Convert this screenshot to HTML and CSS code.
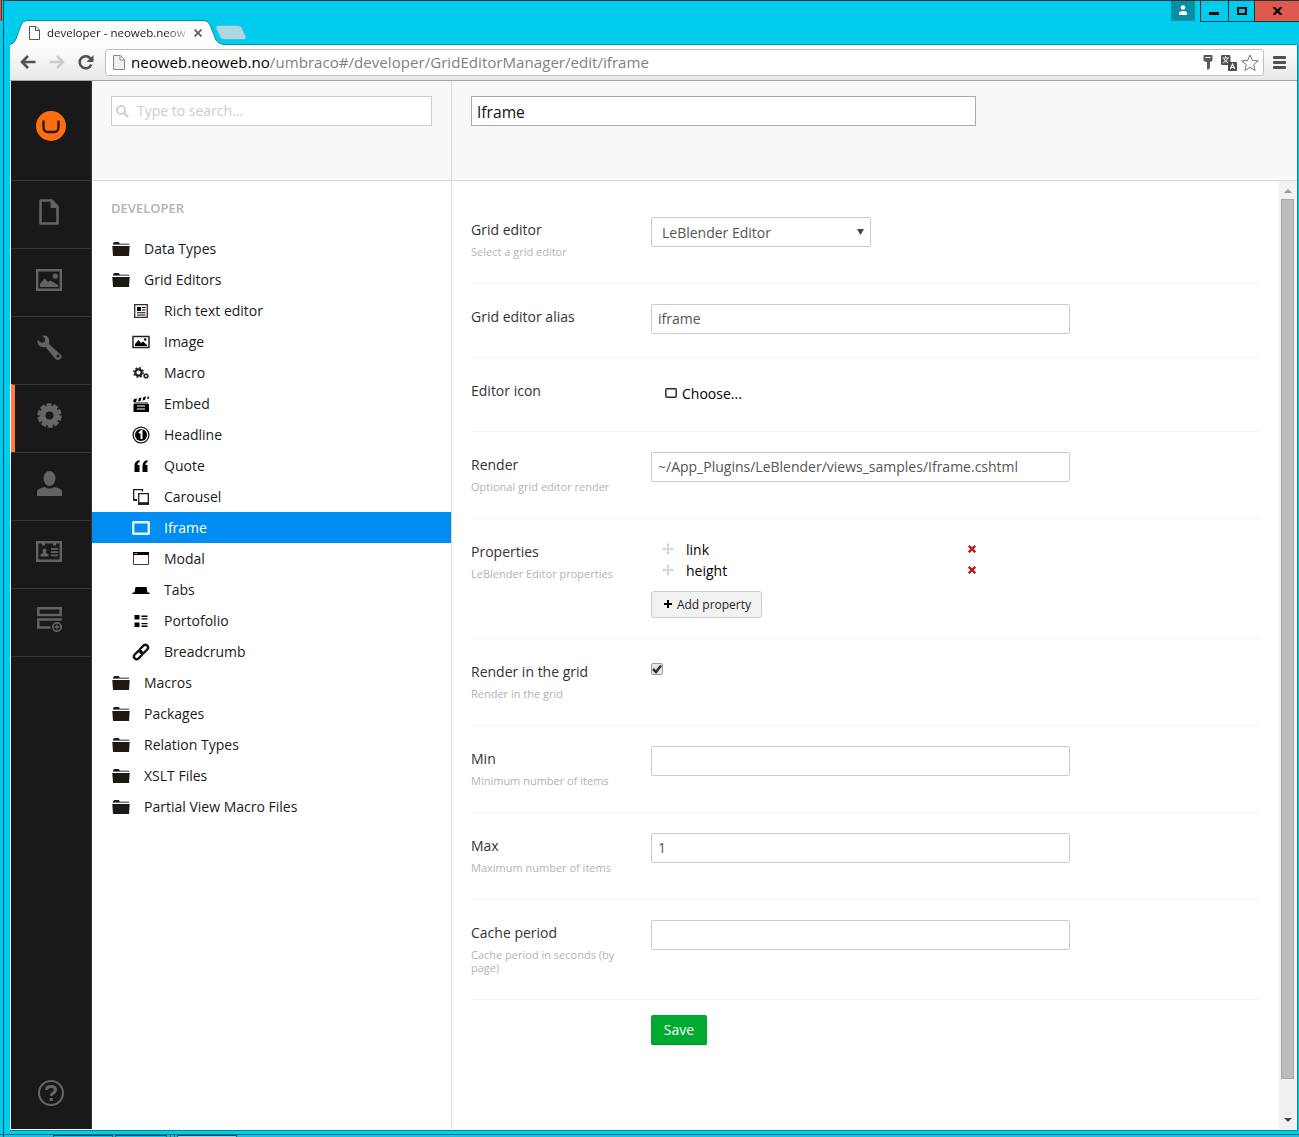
FILE: index.html
```html
<!DOCTYPE html>
<html lang="en">
<head>
<meta charset="utf-8">
<title>developer - neoweb.neoweb.no</title>
<link rel="stylesheet" href="styles.css">
</head>
<body>
<div class="desktop">
  <span class="behind-close"></span>
  <header class="titlebar">
    <div class="tab">
      <svg class="tab-shape" width="212" height="26" viewBox="0 0 212 26"><path d="M0 26V25Q4 24 6 19L11 5Q13 .5 17 .5H194Q198 .5 200 5L206 20Q208 24 212 24V26Z" fill="#fdfdfd"/><path d="M0 24.5Q4 24 6 19L11 5Q13 .5 17 .5H194Q198 .5 200 5L206 20Q208 23.500 212 23.500" fill="none" stroke="#078fa8"/></svg>
      <div class="tab-content">
        <svg width="11" height="14" viewBox="0 0 11 14" fill="#fff" stroke="#555"><path d="M.5.5H7L10.500 4V13.500H.5ZM6.500.5V4.500H10.500"/></svg>
        <span class="tab-title">developer - neoweb.neow</span>
        <svg width="8" height="8" viewBox="0 0 8 8" stroke="#5a5a5a" stroke-width="1.700"><path d="M.5.5l7 7M7.500.5l-7 7"/></svg>
      </div>
    </div>
    <svg class="new-tab" width="32" height="15" viewBox="0 0 32 15"><path d="M3 .5H23Q26 .5 27 3L31 12Q31 14.500 29 14.500H9Q6 14.500 5 12L1 3Q.5.5 3 .5Z" fill="#afd6e3" stroke="#3fbdd3" stroke-width=".8"/></svg>
    <div class="controls">
      <span class="profile"><svg width="10" height="10" viewBox="0 0 10 10" fill="#fff"><circle cx="5" cy="2.500" r="2.300"/><path d="M1 10V8Q1 6 5 6T9 8V10Z"/></svg></span>
      <span class="minimize"><svg width="10" height="3"><path d="M0 0H10V3H0Z"/></svg></span>
      <span class="maximize"><svg width="10" height="8" fill="none" stroke="#000" stroke-width="2"><path d="M1 1H9V7H1Z"/></svg></span>
      <span class="close"><svg width="9" height="8" viewBox="0 0 9 8" stroke="#000" stroke-width="2.200"><path d="M.5 0L8.500 8M8.500 0L.5 8"/></svg></span>
    </div>
  </header>
  <main class="browser">
    <nav class="toolbar">
      <svg class="nav-icon" width="16" height="14" viewBox="0 0 16 14" fill="none" stroke="#525252" stroke-width="2.600"><path d="M15.500 7H2M8 1L2 7L8 13"/></svg>
      <svg class="nav-icon forward" width="16" height="14" viewBox="0 0 16 14" fill="none" stroke="#cbcbcb" stroke-width="2.600"><path d="M.5 7H14M8 1L14 7L8 13"/></svg>
      <svg class="nav-icon reload" width="16" height="15" viewBox="0 0 16 15"><path d="M12.500 3.600A6 6 0 1 0 13.300 9.500" fill="none" stroke="#525252" stroke-width="2.600"/><path d="M15.500 0V7H8.500Z" fill="#525252"/></svg>
      <div class="address">
        <svg class="page-icon" width="12" height="15" viewBox="0 0 12 15" fill="#f1f1f1" stroke="#888"><path d="M.5.5H7.500L11.500 4.500V14.500H.5ZM7 .5V5H11.500"/></svg>
        <span class="url"><b>neoweb.neoweb.no</b>/umbraco#/developer/GridEditorManager/edit/iframe</span>
        <svg width="10" height="15" viewBox="0 0 10 15"><path d="M.5 1Q.5 0 1.500 0H8.500Q9.500 0 9.500 1V5Q9.500 6.500 7 7V13L5.500 14.500H4V7Q.5 6.500.5 5Z" fill="#5b5b5b"/><path d="M2.500 2H7.500V3H2.500Z" fill="#fff"/></svg>
        <svg class="translate" width="16" height="16" viewBox="0 0 16 16"><rect width="9.500" height="10" rx="1" fill="#555"/><path d="M1.500 3H8M4.700 1.200V3M6.800 3Q6 6 2 8M2.700 3.500Q4 6.500 7.500 8" stroke="#fff" fill="none" stroke-width=".9"/><rect x="7" y="7" width="9" height="9" rx="1" fill="#4d4d4d"/><path d="M9.300 14L11.500 9L13.700 14M10 12.500H13" stroke="#fff" fill="none" stroke-width="1.100"/></svg>
        <svg width="18" height="18" viewBox="0 0 18 18" fill="#fff" stroke="#747474" stroke-linejoin="round"><path d="M9 1L11.300 6.400L17.200 6.900L12.700 10.700L14.100 16.500L9 13.400L3.900 16.500L5.300 10.700L.8 6.900L6.700 6.400Z"/></svg>
      </div>
      <svg class="menu" width="13" height="13" fill="#505050"><rect width="13" height="3" rx="1"/><rect y="5" width="13" height="3" rx="1"/><rect y="10" width="13" height="3" rx="1"/></svg>
    </nav>
    <div class="app">
      <aside class="sections">
        <div class="logo"><svg width="30" height="30" viewBox="0 0 30 30"><circle cx="15" cy="15" r="15" fill="#ff6d10"/><path d="M7.500 9.500V16Q7.500 21 12 21H18Q22.500 21 22.500 16V9.500" fill="none" stroke="#2b170c" stroke-width="2.300"/></svg></div>
        <a class="section"><svg width="20" height="26" viewBox="0 0 20 26"><path d="M2 1.500H12.500L18.500 7.500V24.500H1.500V2Z" fill="none" stroke="#636363" stroke-width="2.600" stroke-linejoin="round"/><path d="M11.500 1V9H19Z" fill="#636363"/></svg></a>
        <a class="section"><svg width="26" height="22" viewBox="0 0 26 22"><path d="M1.200 1.200H24.800V20.800H1.200Z" fill="none" stroke="#636363" stroke-width="2.400"/><path d="M4 18V15L8.500 9.500L12 13L14.500 11.500L22 16V18Z" fill="#636363"/><circle cx="19.300" cy="7" r="2.600" fill="#636363"/></svg></a>
        <a class="section"><svg width="25" height="25" viewBox="0 0 25 25"><path d="M5 .8Q10-.5 12 4Q12.500 7 12 9L23.500 19.500Q26 22 23 24Q20.500 26 18 23.500L8.500 12Q4 13 1.500 10Q0 7.500.5 5L5 8L8 6.500V3.500Z" fill="#636363"/><circle cx="21" cy="21" r="1.500" fill="#191919"/></svg></a>
        <a class="section active"><svg width="25" height="25" viewBox="-12.500 -12.500 25 25"><circle r="7" fill="none" stroke="#666" stroke-width="6"/><circle r="10.200" fill="none" stroke="#666" stroke-width="4" stroke-dasharray="4.800 1.609"/></svg></a>
        <a class="section"><svg width="25" height="25" viewBox="0 0 25 25" fill="#636363"><ellipse cx="12.500" cy="7.500" rx="6" ry="7.500"/><path d="M0 25V20Q1 17 8 16Q12.500 19 17 16Q24 17 25 20V25Z"/></svg></a>
        <a class="section"><svg width="26" height="21" viewBox="0 0 26 21"><path d="M1.200 1.200H24.800V19.800H1.200Z" fill="none" stroke="#636363" stroke-width="2.400"/><path d="M6 1V4.500H9V1ZM17 1V4.500H20V1ZM15 7H22V8.800H15ZM15 10.200H22V12H15ZM15 13.400H22V15.200H15ZM4.500 15.500V13.500L7 12V11A2 2 0 1 1 10 11V12L12.500 13.500V15.500Z" fill="#636363"/></svg></a>
        <a class="section"><svg width="25" height="26" viewBox="0 0 25 26" fill="none" stroke="#636363"><path d="M1.300 2.300H23.700V9H1.300ZM23.700 14.500V13.500H1.300V21.500H13.500" stroke-width="2.500"/><circle cx="20" cy="21" r="4.200" stroke-width="1.700"/><path d="M17.500 21H22.500M20 18.500V23.500" stroke-width="1.300"/></svg></a>
        <a class="help"><svg width="26" height="26" viewBox="0 0 26 26" fill="none" stroke="#666"><circle cx="13" cy="13" r="12" stroke-width="2"/><path d="M8.500 10Q8.500 6.500 13 6.500Q17.500 6.500 17.500 9.800Q17.500 12 15 13.200Q13.200 14.200 13.200 16" stroke-width="3"/><path d="M11.600 18H14.800V21H11.600Z" fill="#666" stroke="none"/></svg></a>
      </aside>
      <section class="navigation">
        <div class="search-area"><div class="search"><svg width="13" height="14" viewBox="0 0 13 14" fill="none" stroke="#d2d2d2"><circle cx="5" cy="6" r="4" stroke-width="2"/><path d="M8 9L12 13" stroke-width="2.500"/></svg><span>Type to search...</span></div></div>
        <div class="tree">
          <h2>DEVELOPER</h2>
          <a class="node"><svg class="folder" viewBox="0 0 18 14"><path d="M1 2L2 0H7L8 1.500H17V3H1Z" fill="#70747b"/><path d="M1.500 1L2.500 0H6.500L7.500 2H1ZM.3 4H17.700L17 14H1Z" fill="#1c1917"/></svg>Data Types</a>
          <a class="node"><svg class="folder" viewBox="0 0 18 14"><path d="M1 2L2 0H7L8 1.500H17V3H1Z" fill="#70747b"/><path d="M1.500 1L2.500 0H6.500L7.500 2H1ZM.3 4H17.700L17 14H1Z" fill="#1c1917"/></svg>Grid Editors</a>
          <a class="node child"><svg viewBox="0 0 18 18"><path d="M2.700 2.700H15.300V15.300H2.700Z" fill="#fff" stroke="#352b25" stroke-width="1.300"/><path d="M5 5H9V9H5ZM10 5H13.500V6H10ZM10 7.500H13.500V8.500H10ZM5 10.300H13.500V11.300H5ZM5 12.500H13.500V13.500H5Z"/></svg>Rich text editor</a>
          <a class="node child"><svg viewBox="0 0 18 18"><path d="M1 3.500H17V14.500H1Z" fill="none" stroke="#222" stroke-width="1.500"/><path d="M3 13V11L6.500 7L9 10L11 8.500L15 12V13Z"/><circle cx="13.200" cy="6.500" r="1.300"/></svg>Image</a>
          <a class="node child"><svg viewBox="0 0 18 18" fill="none" stroke="#1c1c1c"><circle cx="6.500" cy="8.500" r="3.200" stroke-width="2.200"/><circle cx="6.500" cy="8.500" r="4.700" stroke-width="1.500" stroke-dasharray="1.850 1.840"/><circle cx="14" cy="12" r="1.700" stroke-width="1.300"/><circle cx="14" cy="12" r="2.500" stroke-dasharray="1 .96"/></svg>Macro</a>
          <a class="node child"><svg viewBox="0 0 18 18"><path d="M1.500 9H17V17H1.500ZM1 7L2 4L5 3.500L4 7ZM6 6.500L7 3L9.500 2.500L8.500 6ZM10.500 5.500L11.500 2L14 1.500L13 5ZM15 4L15.700 1.500H17V3.500ZM2 7.500H16V8.500H2Z"/><path d="M5 11H13M5 14H13" stroke="#fff"/></svg>Embed</a>
          <a class="node child"><svg viewBox="0 0 18 18"><circle cx="9" cy="9" r="7.900" fill="#fff" stroke="#151515" stroke-width="1.300"/><circle cx="9" cy="9" r="6"/><path d="M7 7L9.500 5V13" fill="none" stroke="#fff" stroke-width="2"/></svg>Headline</a>
          <a class="node child"><svg viewBox="0 0 18 18"><path d="M7.500 3V5Q5.500 5.500 5.500 8H7.500V15H2.500V9Q2.500 4 7.500 3ZM15.500 3V5Q13.500 5.500 13.500 8H15.500V15H10.500V9Q10.500 4 15.500 3Z"/></svg>Quote</a>
          <a class="node child"><svg viewBox="0 0 18 18" fill="none" stroke="#1c1c1c"><path d="M10.500 3.500V1.700H1.700V12H4.500" stroke-width="1.300"/><path d="M6.700 5.700H16.300V16H6.700Z" stroke-width="1.300"/><path d="M6 15.500H17" stroke-width="2.600"/><path d="M2 12H5" stroke-width="2"/></svg>Carousel</a>
          <a class="node child selected"><svg viewBox="0 0 18 18" fill="none" stroke="#e6f2ff" stroke-width="2.400"><rect x="1.200" y="3.200" width="15.600" height="11.600" rx=".5"/></svg>Iframe</a>
          <a class="node child"><svg viewBox="0 0 18 18"><path d="M1.500 3.500H16.500V14.500H1.500Z" fill="none" stroke="#42394d"/><path d="M1 2H17V5H1Z"/><path d="M2.500 3.500H6" stroke="#eee" stroke-dasharray="1 .8"/></svg>Modal</a>
          <a class="node child"><svg viewBox="0 0 18 18"><path d="M.5 13V11.500H2.500L3.500 6H14.500L15.500 11.500H17.500V13Z"/></svg>Tabs</a>
          <a class="node child"><svg viewBox="0 0 18 18"><path d="M2.500 3H7.500V7.500H2.500ZM2.500 10.500H7.500V15H2.500ZM9.500 3.500H15.500V5H9.500ZM9.500 6.200H15.500V7.500H9.500ZM9.500 11H15.500V12.300H9.500ZM9.500 13.500H15.500V15H9.500Z"/></svg>Portofolio</a>
          <a class="node child"><svg viewBox="0 0 18 18" fill="none" stroke="#111" stroke-width="2.400"><rect x="-4.700" y="-2.700" width="9.400" height="5.400" rx="2.700" transform="translate(11.900 6) rotate(-45)"/><rect x="-4.700" y="-2.700" width="9.400" height="5.400" rx="2.700" transform="translate(6.100 12) rotate(-45)"/></svg>Breadcrumb</a>
          <a class="node"><svg class="folder" viewBox="0 0 18 14"><path d="M1 2L2 0H7L8 1.500H17V3H1Z" fill="#70747b"/><path d="M1.500 1L2.500 0H6.500L7.500 2H1ZM.3 4H17.700L17 14H1Z" fill="#1c1917"/></svg>Macros</a>
          <a class="node"><svg class="folder" viewBox="0 0 18 14"><path d="M1 2L2 0H7L8 1.500H17V3H1Z" fill="#70747b"/><path d="M1.500 1L2.500 0H6.500L7.500 2H1ZM.3 4H17.700L17 14H1Z" fill="#1c1917"/></svg>Packages</a>
          <a class="node"><svg class="folder" viewBox="0 0 18 14"><path d="M1 2L2 0H7L8 1.500H17V3H1Z" fill="#70747b"/><path d="M1.500 1L2.500 0H6.500L7.500 2H1ZM.3 4H17.700L17 14H1Z" fill="#1c1917"/></svg>Relation Types</a>
          <a class="node"><svg class="folder" viewBox="0 0 18 14"><path d="M1 2L2 0H7L8 1.500H17V3H1Z" fill="#70747b"/><path d="M1.500 1L2.500 0H6.500L7.500 2H1ZM.3 4H17.700L17 14H1Z" fill="#1c1917"/></svg>XSLT Files</a>
          <a class="node"><svg class="folder" viewBox="0 0 18 14"><path d="M1 2L2 0H7L8 1.500H17V3H1Z" fill="#70747b"/><path d="M1.500 1L2.500 0H6.500L7.500 2H1ZM.3 4H17.700L17 14H1Z" fill="#1c1917"/></svg>Partial View Macro Files</a>
        </div>
      </section>
      <section class="editor">
        <div class="editor-head"><div class="name-field">Iframe</div></div>
        <div class="editor-body">
          <form class="form">
            <div class="row"><div class="label">Grid editor<small>Select a grid editor</small></div><div class="select"><span>LeBlender Editor</span><svg width="7" height="6" fill="#444"><path d="M0 0H7L3.500 6Z"/></svg></div></div>
            <div class="row short"><div class="label">Grid editor alias</div><div class="field">iframe</div></div>
            <div class="row short"><div class="label">Editor icon</div><div class="choose"><svg width="12" height="10" fill="none" stroke="#2b2b33" stroke-width="1.500"><rect x=".8" y=".8" width="10.400" height="8.400" rx="1"/></svg>Choose...</div></div>
            <div class="row"><div class="label">Render<small>Optional grid editor render</small></div><div class="field">~/App_Plugins/LeBlender/views_samples/Iframe.cshtml</div></div>
            <div class="row tall"><div class="label">Properties<small>LeBlender Editor properties</small></div>
              <div class="properties">
                <div class="property"><svg width="12" height="12" viewBox="0 0 12 12" fill="#d2d2d2"><path d="M6 0L8 2.500H6.800V5.200H9.500V4L12 6L9.500 8V6.800H6.800V9.500H8L6 12L4 9.500H5.200V6.800H2.500V8L0 6L2.500 4V5.200H5.200V2.500H4Z"/></svg><span>link</span><svg width="8" height="8" viewBox="0 0 8 8" stroke="#b91c1c" stroke-width="2.300"><path d="M.7.7L7.300 7.300M7.300.7L.7 7.300"/></svg></div>
                <div class="property"><svg width="12" height="12" viewBox="0 0 12 12" fill="#d2d2d2"><path d="M6 0L8 2.500H6.800V5.200H9.500V4L12 6L9.500 8V6.800H6.800V9.500H8L6 12L4 9.500H5.200V6.800H2.500V8L0 6L2.500 4V5.200H5.200V2.500H4Z"/></svg><span>height</span><svg width="8" height="8" viewBox="0 0 8 8" stroke="#b91c1c" stroke-width="2.300"><path d="M.7.7L7.300 7.300M7.300.7L.7 7.300"/></svg></div>
                <div class="add"><svg width="8" height="8" stroke="#000" stroke-width="2"><path d="M4 0V8M0 4H8"/></svg>Add property</div>
              </div></div>
            <div class="row"><div class="label">Render in the grid<small>Render in the grid</small></div><div class="checkbox"><svg width="10" height="10" viewBox="0 0 10 10" fill="none" stroke="#333" stroke-width="2.500"><path d="M1 5L4 8L9 1.500"/></svg></div></div>
            <div class="row"><div class="label">Min<small>Minimum number of items</small></div><div class="field"></div></div>
            <div class="row"><div class="label">Max<small>Maximum number of items</small></div><div class="field">1</div></div>
            <div class="row last"><div class="label">Cache period<small>Cache period in seconds (by page)</small></div><div class="field"></div></div>
            <div class="save">Save</div>
          </form>
          <div class="scrollbar"><svg width="8" height="4"><path d="M0 4L4 0L8 4Z" fill="#999"/></svg><span class="thumb"></span><svg width="8" height="4"><path d="M0 0H8L4 4Z" fill="#444"/></svg></div>
        </div>
      </section>
    </div>
  </main>
  <footer class="taskbar"><i class="task one"></i><i class="task two"></i><i class="task gap"></i><i class="task current"></i></footer>
</div>
</body>
</html>
```
FILE: styles.css
```css
* { box-sizing: border-box; }
body { margin: 0; font: 14px/20px "Open Sans", "Noto Sans", sans-serif; color: #1a1a1a; }
svg { display: block; flex: none; }
.desktop {
  position: relative;
  width: 1299px;
  height: 1137px;
  overflow: hidden;
  display: flex;
  flex-direction: column;
  background: linear-gradient(90deg, #00cdee 3px, #064d59 3px, #064d59 4px, #00cdee 4px);
}
.behind-close { position: absolute; left: 0; top: 0; width: 2px; height: 21px; background: #df5a4e; border-right: 1px solid #532d30; }

/* Window frame */
.titlebar { height: 45px; flex: none; display: flex; align-items: flex-start; border-top: 1px solid #24333a; margin-left: 3px; padding-left: 7px; }
.tab { display: grid; margin-top: 19px; position: relative; z-index: 1; }
.tab > * { grid-area: 1 / 1; }
.tab-content { display: flex; align-items: center; padding-left: 19px; height: 25px; }
.tab-title {
  width: 140px; margin-left: 7px; margin-right: 7px; white-space: nowrap;
  font-size: 11.500px; line-height: 16px;
  color: transparent;
  background: linear-gradient(90deg, #1a1a1a 118px, #1a1a1a33 140px);
  -webkit-background-clip: text;
  background-clip: text;
}
.new-tab { margin: 24px 0 0 -7px; }
.controls { display: flex; margin-left: auto; height: 21px; }
.controls span { display: flex; align-items: center; justify-content: center; height: 21px; border: solid #113640; border-width: 0 0 1px 1px; }
.controls .profile { width: 24px; margin-right: 5px; height: 20px; background: #078ea5; border: 0; padding-bottom: 2px; }
.controls .minimize { width: 28px; padding-top: 5px; padding-right: 2px; }
.controls .maximize { width: 26px; }
.controls .close { width: 45px; background: #df5a4e; }

.browser { width: 1288px; height: 1086px; flex: none; margin-left: 10px; display: flex; flex-direction: column; border: solid #0c8297; border-width: 0 1px 1px 0; background: #fff; }
.toolbar {
  height: 36px; flex: none; display: flex; align-items: center;
  padding: 0 11px 0 10px;
  background: linear-gradient(#fdfdfd, #e8e8e8);
  border-bottom: 1px solid #a5a5a5;
}
.titlebar::after { content: ""; position: absolute; left: 221px; right: 3px; top: 44px; height: 1px; background: #078fa8; }
.nav-icon { margin-bottom: 1px; }
.forward { margin-left: 13px; }
.reload { margin-left: 13px; }
.address { display: flex; align-items: center; width: 1159px; height: 27px; margin-left: 11px; padding: 0 4px 0 7px; background: #fff; border: 1px solid #c0c0c0; border-radius: 3px; }
.url { flex: 1; margin-left: 6px; padding-bottom: 2px; font-size: 15.120px; color: #7f7f7f; white-space: nowrap; }
.url b { font-weight: 400; color: #000; }
.translate { margin: 0 4px 0 8px; }
.menu { margin-left: 9px; }

/* Application */
.app { flex: 1; min-height: 0; display: grid; grid-template-columns: 81px 360px 1fr; margin-left: 1px; margin-bottom: 1px; }
.sections { display: flex; flex-direction: column; background: #191919; border-right: 1px solid #343434; }
.logo { height: 99px; padding: 30px 0 0 25px; }
.section { height: 68px; display: flex; align-items: center; justify-content: center; padding-right: 4px; padding-bottom: 6px; border-top: 1px solid #363636; }
.section.active { border-left: 4px solid #ff7b3d; padding-right: 8px; }
.section:nth-last-child(2) { height: 69px; border-bottom: 1px solid #363636; padding-bottom: 7px; }
.help { margin-top: auto; padding: 0 0 23px 27px; }

.navigation { border-right: 1px solid #d9d9d9; }
.search-area, .editor-head { height: 100px; padding: 15px 19px; background: #f8f8f8; border-bottom: 1px solid #d9d9d9; }
.search { height: 30px; display: flex; align-items: center; gap: 8px; padding-left: 4px; background: #fff; border: 1px solid #ccc; color: #ccc; }
.tree h2 { margin: 0; height: 52px; padding: 17px 19px 0; font-size: 13px; line-height: 20px; font-weight: 600; color: #b3b3b3; }
.node { height: 31px; display: flex; align-items: center; gap: 14px; padding-left: 20px; }
.node svg { width: 18px; height: 18px; }
.node .folder { height: 14px; }
.child { padding-left: 40px; }
.selected { background: #008df2; color: #fff; }

.editor { display: flex; flex-direction: column; min-width: 0; }
.name-field { width: 505px; height: 30px; padding: 1px 5px 0; line-height: 28px; font-size: 15.600px; color: #111; background: #fff; border: 1px solid #aaa; }
.editor-body { flex: 1; display: flex; }
.form { width: 788px; margin: 16px 20px 0 19px; }
.row { height: 87px; display: flex; align-items: flex-start; padding-top: 20px; border-bottom: 1px solid #f5f5f5; }
.row.short { height: 74px; }
.row.tall { height: 120px; }
.row.last { height: 100px; }
.label { width: 180px; padding: 3px 30px 0 0; color: #333; }
.label small { display: block; margin-top: 5px; font-size: 11px; line-height: 13px; color: #b3b3b3; }
.field { width: 419px; height: 30px; padding: 0 6px; line-height: 28px; color: #555; border: 1px solid #ccc; border-radius: 2px; }
.select { width: 220px; height: 30px; display: flex; align-items: center; justify-content: space-between; padding: 0 6px 0 10px; color: #555; border: 1px solid #ccc; border-radius: 2px; }
.select span { padding-top: 2px; }
.choose { display: flex; align-items: center; gap: 5px; padding: 6px 0 0 14px; color: #000; }
.choose svg { margin-bottom: 2px; }
.property { width: 325px; height: 21px; display: flex; align-items: center; padding-left: 11px; color: #000; }
.property span { flex: 1; margin-left: 12px; }
.property svg { margin-bottom: 2px; }
.add { width: 111px; height: 27px; margin-top: 10px; padding-left: 2px; display: flex; align-items: center; justify-content: center; gap: 5px; font-size: 12px; color: #222; background: #f2f2f2; border: 1px solid #ccc; border-radius: 3px; white-space: nowrap; }
.add svg { margin-bottom: 1px; }
.checkbox { width: 12px; height: 12px; margin-top: 4px; border: 1px solid #999; border-radius: 2px; background: #e7e7e7; }
.save { width: 56px; height: 30px; margin: 15px 0 0 180px; line-height: 30px; text-align: center; color: #fff; background: #00aa2f; border-radius: 2px; border-bottom: 1px solid #008a2b; }
.scrollbar { width: 17px; display: flex; flex-direction: column; align-items: center; padding: 8px 0 7px; background: #f1f1f1; }
.thumb { width: 13px; height: 880px; margin: 6px 0 auto; background: #bcbcbc; border: 1px solid #a8a8a8; }
.taskbar { display: flex; height: 3px; margin-top: auto; border-top: 1px solid #45616a; padding-left: 53px; }
.task { width: 60px; border: solid #075c69; border-width: 1px 1px 0; }
.task.two { width: 52px; margin-left: 2px; }
.task.gap { width: 5px; margin-left: 3px; border-top: 0; }
.task.current { margin-left: 2px; background: #6fe0f4; }
```
